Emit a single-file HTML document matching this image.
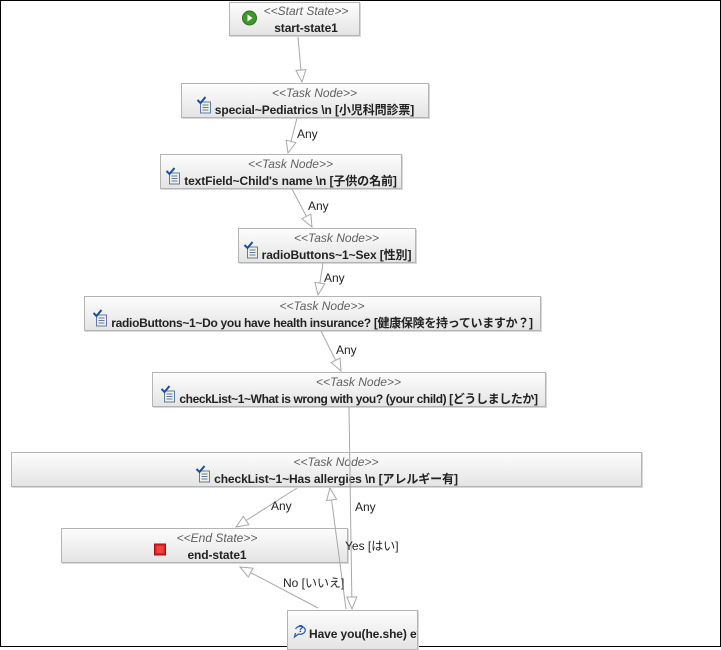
<!DOCTYPE html>
<html><head><meta charset="utf-8"><style>
html,body{margin:0;padding:0;}
body{width:721px;height:647px;position:relative;overflow:hidden;background:#fff;font-family:"Liberation Sans","Noto Sans CJK JP",sans-serif;}
#frame{position:absolute;left:0;top:0;width:719px;height:645px;border:1px solid #000;}
.n{position:absolute;box-sizing:border-box;border:1px solid #b4b4b4;background:linear-gradient(#fdfdfd,#e4e4e4);display:flex;justify-content:center;align-items:flex-end;box-shadow:1px 1px 0 #d8d8d8;overflow:hidden;white-space:nowrap;}
.c{display:flex;align-items:flex-end;margin-bottom:-2px;}
.t{display:flex;flex-direction:column;align-items:center;}
.ti{font-style:italic;color:#606060;font-size:12px;line-height:17px;}
.lb{font-weight:bold;color:#222;font-size:12px;line-height:17px;letter-spacing:-0.1px;}
.ic{width:17px;height:18px;margin-right:2px;margin-bottom:5px;}
svg.e{position:absolute;left:0;top:0;}
.a{position:absolute;font-size:12px;color:#222;line-height:14px;white-space:nowrap;}
</style></head><body>
<div id="frame"></div>

<div class="n" style="left:229px;top:2px;width:131px;height:34px;"><div class="c">
<svg class="ic" viewBox="0 0 16 18" style="margin-bottom:10px;margin-right:6px"><circle cx="8" cy="9" r="7" fill="#3c9a2a" stroke="#2a6e1c"/><path d="M6 5.5L11 9L6 12.5Z" fill="#fff"/></svg>
<div class="t"><span class="ti">&lt;&lt;Start State&gt;&gt;</span><span class="lb">start-state1</span></div></div></div>

<div class="n" style="left:181px;top:83px;width:248px;height:35px;"><div class="c">
<svg class="ic" viewBox="0 0 16 18"><rect x="4" y="6" width="10" height="11" fill="#f4f0e0" stroke="#5a7aa8"/><path d="M6 9h6M6 11.5h6M6 14h6" stroke="#5a7aa8"/><path d="M1 4l3 3 5-6" stroke="#1a4fa0" stroke-width="2" fill="none"/></svg>
<div class="t"><span class="ti">&lt;&lt;Task Node&gt;&gt;</span><span class="lb">special~Pediatrics \n [小児科問診票]</span></div></div></div>

<div class="n" style="left:160px;top:154px;width:242px;height:35px;"><div class="c">
<svg class="ic" viewBox="0 0 16 18"><rect x="4" y="6" width="10" height="11" fill="#f4f0e0" stroke="#5a7aa8"/><path d="M6 9h6M6 11.5h6M6 14h6" stroke="#5a7aa8"/><path d="M1 4l3 3 5-6" stroke="#1a4fa0" stroke-width="2" fill="none"/></svg>
<div class="t"><span class="ti">&lt;&lt;Task Node&gt;&gt;</span><span class="lb">textField~Child's name \n [子供の名前]</span></div></div></div>

<div class="n" style="left:238px;top:228px;width:178px;height:35px;"><div class="c">
<svg class="ic" viewBox="0 0 16 18"><rect x="4" y="6" width="10" height="11" fill="#f4f0e0" stroke="#5a7aa8"/><path d="M6 9h6M6 11.5h6M6 14h6" stroke="#5a7aa8"/><path d="M1 4l3 3 5-6" stroke="#1a4fa0" stroke-width="2" fill="none"/></svg>
<div class="t"><span class="ti">&lt;&lt;Task Node&gt;&gt;</span><span class="lb">radioButtons~1~Sex [性別]</span></div></div></div>

<div class="n" style="left:84px;top:296px;width:457px;height:35px;"><div class="c">
<svg class="ic" viewBox="0 0 16 18"><rect x="4" y="6" width="10" height="11" fill="#f4f0e0" stroke="#5a7aa8"/><path d="M6 9h6M6 11.5h6M6 14h6" stroke="#5a7aa8"/><path d="M1 4l3 3 5-6" stroke="#1a4fa0" stroke-width="2" fill="none"/></svg>
<div class="t"><span class="ti">&lt;&lt;Task Node&gt;&gt;</span><span class="lb" style="letter-spacing:-0.3px">radioButtons~1~Do you have health insurance? [健康保険を持っていますか？]</span></div></div></div>

<div class="n" style="left:152px;top:372px;width:394px;height:35px;"><div class="c">
<svg class="ic" viewBox="0 0 16 18"><rect x="4" y="6" width="10" height="11" fill="#f4f0e0" stroke="#5a7aa8"/><path d="M6 9h6M6 11.5h6M6 14h6" stroke="#5a7aa8"/><path d="M1 4l3 3 5-6" stroke="#1a4fa0" stroke-width="2" fill="none"/></svg>
<div class="t"><span class="ti">&lt;&lt;Task Node&gt;&gt;</span><span class="lb" style="letter-spacing:-0.4px">checkList~1~What is wrong with you? (your child) [どうしましたか]</span></div></div></div>

<div class="n" style="left:11px;top:452px;width:631px;height:35px;"><div class="c">
<svg class="ic" viewBox="0 0 16 18"><rect x="4" y="6" width="10" height="11" fill="#f4f0e0" stroke="#5a7aa8"/><path d="M6 9h6M6 11.5h6M6 14h6" stroke="#5a7aa8"/><path d="M1 4l3 3 5-6" stroke="#1a4fa0" stroke-width="2" fill="none"/></svg>
<div class="t"><span class="ti">&lt;&lt;Task Node&gt;&gt;</span><span class="lb">checkList~1~Has allergies \n [アレルギー有]</span></div></div></div>

<div class="n" style="left:61px;top:528px;width:287px;height:35px;"><div class="c">
<svg class="ic" viewBox="0 0 16 18" style="margin-right:8px;margin-bottom:7px"><rect x="2" y="5" width="11" height="11" fill="#e02020" stroke="#a01010"/><rect x="4" y="7" width="7" height="7" fill="#f04040"/></svg>
<div class="t"><span class="ti">&lt;&lt;End State&gt;&gt;</span><span class="lb">end-state1</span></div></div></div>

<div class="n" style="left:287px;top:610px;width:131px;height:40px;justify-content:flex-start;align-items:flex-start;"><div style="display:flex;align-items:flex-end;margin-top:10px;margin-left:2px;">
<svg class="ic" viewBox="0 0 16 18" style="margin-bottom:4px"><path d="M5 8a5 4 0 1 1 3 5l-4 3 1-4" fill="none" stroke="#3060b0" stroke-width="1.3"/><text x="7" y="11" font-size="10" font-weight="bold" fill="#2050a0" font-family="Liberation Sans">?</text></svg>
<span class="lb">Have you(he.she) ever</span></div></div>

<svg class="e" width="721" height="647">
<defs><marker id="m" markerWidth="14" markerHeight="12" refX="13" refY="6" orient="auto" markerUnits="userSpaceOnUse"><path d="M1 1L13 6L1 11Z" fill="#fff" stroke="#a8a8a8"/></marker></defs>
<g stroke="#a8a8a8" fill="none" marker-end="url(#m)">
<line x1="298" y1="37" x2="302" y2="82"/>
<line x1="297" y1="118" x2="288" y2="153"/>
<line x1="292" y1="189" x2="312" y2="227"/>
<line x1="323" y1="263" x2="318" y2="295"/>
<line x1="321" y1="331" x2="341" y2="371"/>
<line x1="349" y1="407" x2="352" y2="609"/>
<line x1="297" y1="488" x2="236" y2="527"/>
<line x1="346" y1="609" x2="330" y2="488"/>
<line x1="318" y1="608" x2="240" y2="567"/>
</g></svg>
<div class="a" style="left:297px;top:127px;">Any</div>
<div class="a" style="left:308px;top:199px;">Any</div>
<div class="a" style="left:324px;top:271px;">Any</div>
<div class="a" style="left:336px;top:343px;">Any</div>
<div class="a" style="left:271px;top:499px;">Any</div>
<div class="a" style="left:355px;top:500px;">Any</div>
<div class="a" style="left:345px;top:539px;">Yes [はい]</div>
<div class="a" style="left:283px;top:576px;">No [いいえ]</div>
</body></html>
